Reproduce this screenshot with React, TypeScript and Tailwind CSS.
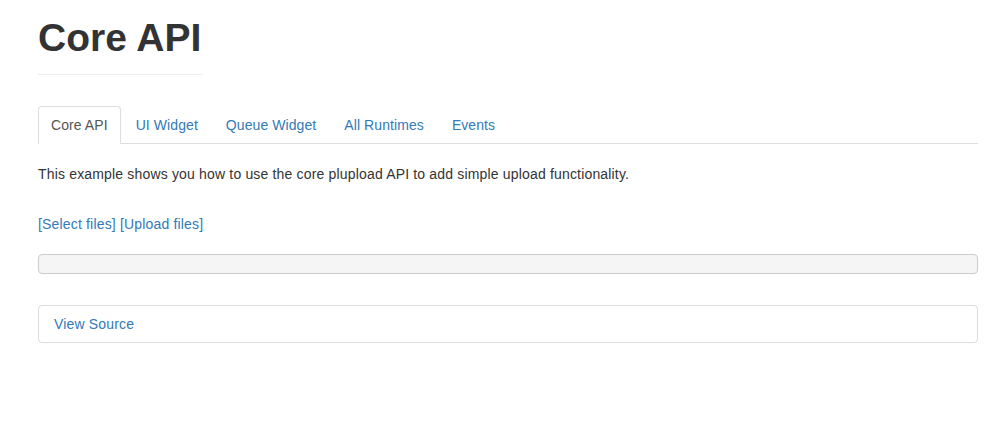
import React from "react";

export default function App() {
  const tabs = ["Core API", "UI Widget", "Queue Widget", "All Runtimes", "Events"];
  return (
    <div
      className="min-h-[448px] bg-white text-[#333] text-[14px] leading-[20px] tracking-[0.17px]"
      style={{ fontFamily: '"Liberation Sans", Arial, Helvetica, sans-serif' }}
    >
      <div className="mx-[38px] w-[940px] pt-[16px]">
        <h1 className="inline-block border-b border-[#eee] pb-[15px] pr-[2px] text-[39px] font-bold leading-[43px] tracking-normal text-[#333]">
          Core API
        </h1>
        <ul className="mt-[31px] flex border-b border-[#ddd] tracking-[0.08px]">
          {tabs.map((t, i) =>
            i === 0 ? (
              <li key={t} className="-mb-px mr-[2px]">
                <span className="block rounded-t-[4px] border border-[#ddd] border-b-white bg-white px-[12px] pt-[8px] pb-[8px] text-[#555]">
                  {t}
                </span>
              </li>
            ) : (
              <li key={t} className="-mb-px mr-[2px]">
                <a className="block cursor-pointer rounded-t-[4px] border border-transparent px-[12px] pt-[8px] pb-[8px] text-[#337ab7]">
                  {t}
                </a>
              </li>
            )
          )}
        </ul>
        <p className="mt-[20px]">
          This example shows you how to use the core plupload API to add simple upload functionality.
        </p>
        <div className="mt-[30px] text-[#337ab7]">
          <a className="cursor-pointer">[Select files]</a> <a className="cursor-pointer">[Upload files]</a>
        </div>
        <div className="mt-[20px] h-[20px] rounded-[4px] border border-[#ccc] bg-[#f5f5f5]"></div>
        <div className="mt-[31px] h-[38px] rounded-[4px] border border-[#ddd] px-[15px] py-[8px] text-[#337ab7]">
          <a className="cursor-pointer">View Source</a>
        </div>
      </div>
    </div>
  );
}
